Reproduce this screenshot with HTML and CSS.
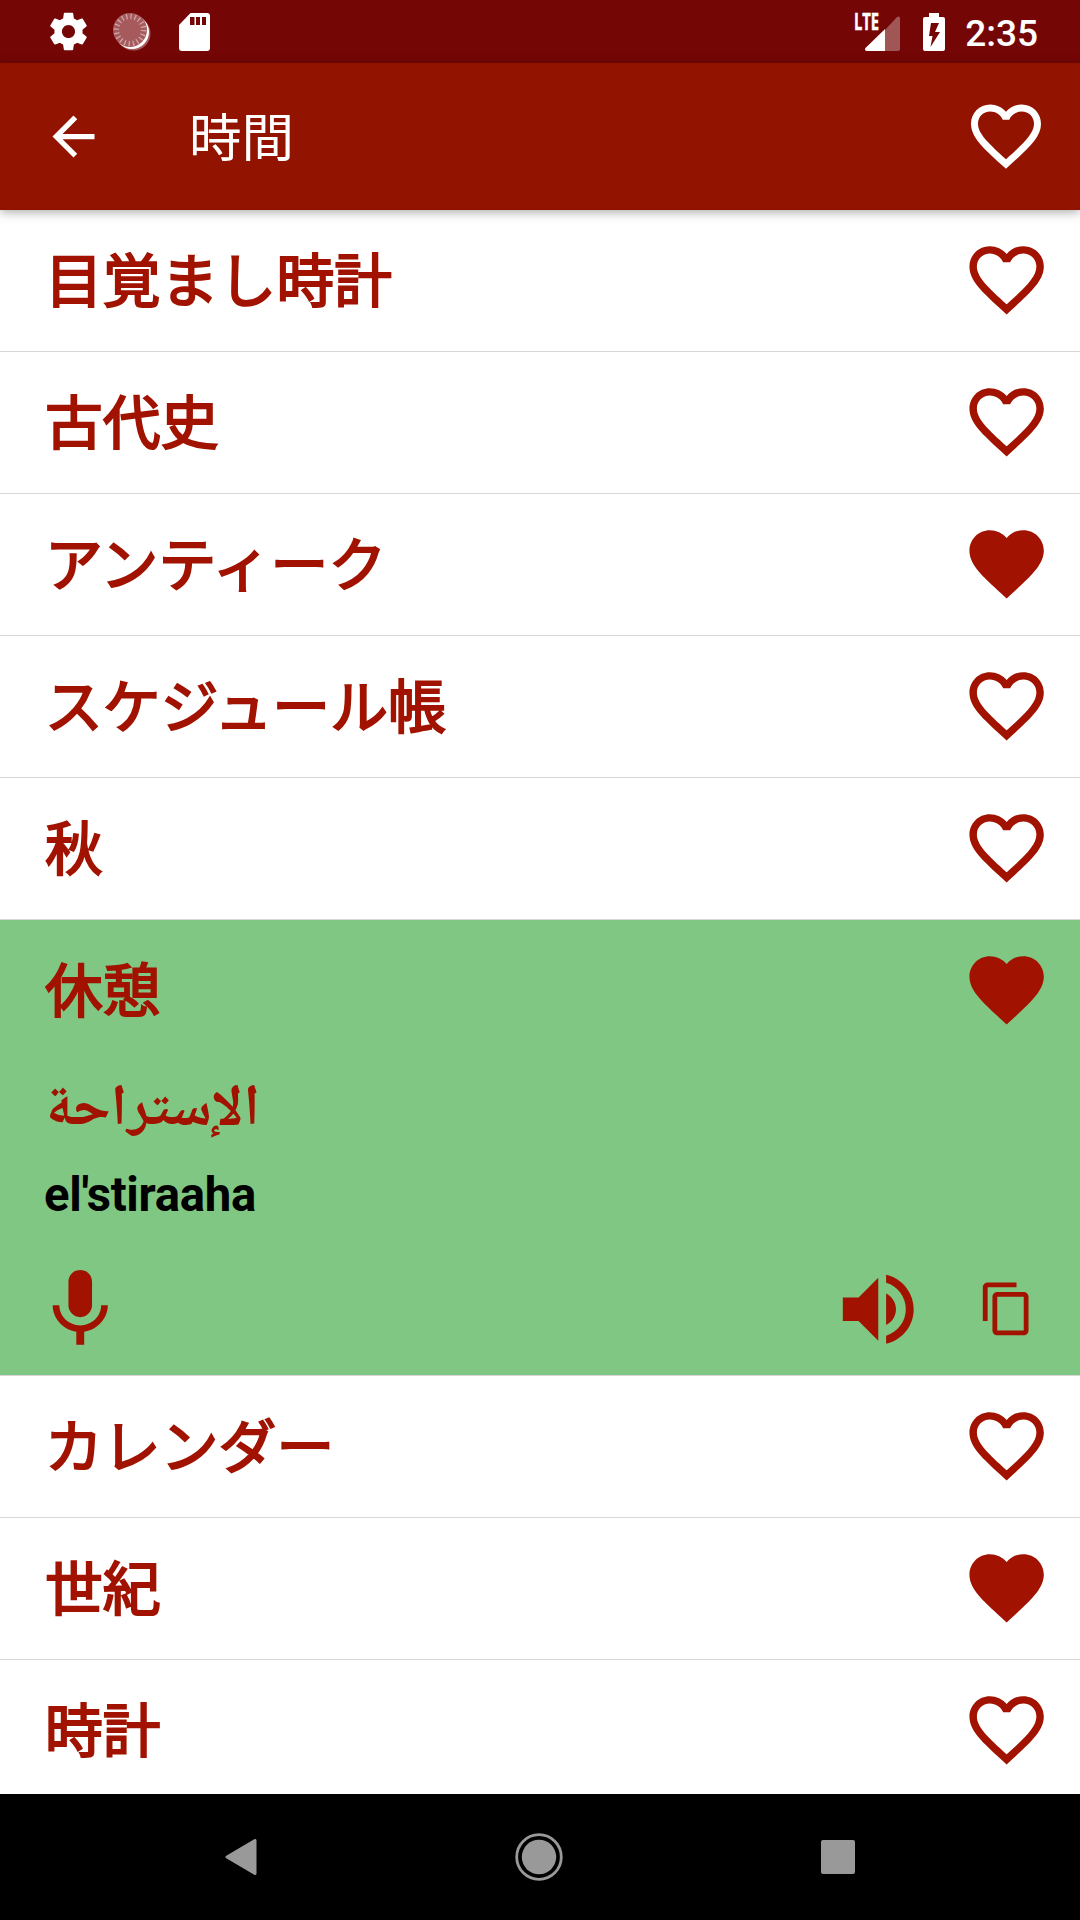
FILE: index.html
```html
<!DOCTYPE html>
<html lang="ja">
<head>
  <meta charset="UTF-8">
  <meta name="viewport" content="width=device-width, initial-scale=1.0">
  <title>時間</title>
  <link rel="stylesheet" href="styles.css">
</head>
<body>
  <!-- アイコン定義 -->
  <svg class="defs" width="0" height="0">
    <symbol id="heart-outline" viewBox="0 0 24 24">
      <path d="M16.5 3c-1.74 0-3.41.81-4.5 2.09C10.91 3.81 9.24 3 7.5 3 4.42 3 2 5.42 2 8.5c0 3.78 3.4 6.86 8.55 11.54L12 21.35l1.45-1.32C18.6 15.36 22 12.28 22 8.5 22 5.42 19.58 3 16.5 3zm-4.4 15.55l-.1.1-.1-.1C7.14 14.24 4 11.39 4 8.5 4 6.5 5.5 5 7.5 5c1.54 0 3.04.99 3.57 2.36h1.87C13.46 5.99 14.96 5 16.5 5c2 0 3.5 1.5 3.5 3.5 0 2.89-3.14 5.74-7.9 10.05z"/>
    </symbol>
    <symbol id="heart" viewBox="0 0 24 24">
      <path d="M12 21.35l-1.45-1.32C5.4 15.36 2 12.28 2 8.5 2 5.42 4.42 3 7.5 3c1.74 0 3.41.81 4.5 2.09C13.09 3.81 14.76 3 16.5 3 19.58 3 22 5.42 22 8.5c0 3.78-3.4 6.86-8.55 11.54L12 21.35z"/>
    </symbol>
  </svg>

  <div class="status-bar">
    <div class="status-left">
      <svg class="status-gear" viewBox="0 0 24 24"><path d="M19.43 12.98c.04-.32.07-.64.07-.98s-.03-.66-.07-.98l2.11-1.65c.19-.15.24-.42.12-.64l-2-3.46c-.12-.22-.39-.3-.61-.22l-2.49 1c-.52-.4-1.08-.73-1.69-.98l-.38-2.65C14.46 2.18 14.25 2 14 2h-4c-.25 0-.46.18-.49.42l-.38 2.65c-.61.25-1.17.59-1.69.98l-2.49-1c-.23-.09-.49 0-.61.22l-2 3.46c-.13.22-.07.49.12.64l2.11 1.65c-.04.32-.07.65-.07.98s.03.66.07.98l-2.11 1.65c-.19.15-.24.42-.12.64l2 3.46c.12.22.39.3.61.22l2.49-1c.52.4 1.08.73 1.69.98l.38 2.65c.03.24.24.42.49.42h4c.25 0 .46-.18.49-.42l.38-2.65c.61-.25 1.17-.59 1.69-.98l2.49 1c.23.09.49 0 .61-.22l2-3.46c.12-.22.07-.49-.12-.64l-2.11-1.65zM12 15.5c-1.93 0-3.5-1.57-3.5-3.5s1.57-3.5 3.5-3.5 3.5 1.57 3.5 3.5-1.57 3.5-3.5 3.5z"/></svg>
      <svg class="status-sync" viewBox="0 0 38 38">
        <circle cx="20.5" cy="20.5" r="17" fill="#a65a5c"/>
        <circle cx="19" cy="19" r="17" fill="#fff"/>
        <circle cx="17" cy="17" r="17" fill="#a65a5c"/>
        <circle class="ticks" cx="17" cy="17" r="13.6"/>
      </svg>
      <svg class="status-sd" viewBox="0 0 31 38"><path d="M11.5 0H28a3 3 0 0 1 3 3v32a3 3 0 0 1-3 3H3a3 3 0 0 1-3-3V12zM11 4v8h4.500V4zm6 0v8h4V4zm6 0v8h4V4z" fill-rule="evenodd"/></svg>
    </div>
    <div class="status-right">
      <div class="signal">
        <span class="signal-label">LTE</span>
        <svg class="signal-icon" viewBox="0 0 35 35"><path d="M20 14V35h13a2 2 0 0 0 2-2V2q-.5-2.500-3-1z" opacity=".32"/><path d="M20 13V35H1.500q-2.500-1-1-3z"/></svg>
      </div>
      <svg class="battery" viewBox="0 0 22 38"><path fill-rule="evenodd" d="M6 0h10v4h4a2 2 0 0 1 2 2v30a2 2 0 0 1-2 2H2a2 2 0 0 1-2-2V6a2 2 0 0 1 2-2h4zM8 10L6 23h3.500L7.500 34 17 19h-5l4-9z"/></svg>
      <span class="clock">2:35</span>
    </div>
  </div>

  <header class="toolbar">
    <svg class="back" viewBox="0 0 24 24"><path d="M20 11H7.830l5.590-5.590L12 4l-8 8 8 8 1.410-1.410L7.830 13H20v-2z"/></svg>
    <h1>時間</h1>
    <svg class="fav-all"><use href="#heart-outline"/></svg>
  </header>

  <main class="word-list">
    <div class="word"><div class="word-head"><span>目覚まし時計</span><svg class="fav"><use href="#heart-outline"/></svg></div></div>
    <div class="word"><div class="word-head"><span>古代史</span><svg class="fav"><use href="#heart-outline"/></svg></div></div>
    <div class="word"><div class="word-head"><span>アンティーク</span><svg class="fav"><use href="#heart"/></svg></div></div>
    <div class="word"><div class="word-head"><span>スケジュール帳</span><svg class="fav"><use href="#heart-outline"/></svg></div></div>
    <div class="word"><div class="word-head"><span>秋</span><svg class="fav"><use href="#heart-outline"/></svg></div></div>
    <div class="word open">
      <div class="word-head"><span>休憩</span><svg class="fav"><use href="#heart"/></svg></div>
      <p class="translation" lang="ar">الإستراحة</p>
      <p class="reading">el'stiraaha</p>
      <div class="actions">
        <svg class="mic" viewBox="0 0 24 24"><path d="M12 14c1.660 0 2.990-1.340 2.990-3L15 5c0-1.660-1.340-3-3-3S9 3.340 9 5v6c0 1.660 1.340 3 3 3zm5.300-3c0 3-2.540 5.100-5.300 5.100S6.700 14 6.700 11H5c0 3.410 2.720 6.230 6 6.720V21h2v-3.280c3.280-.48 6-3.300 6-6.720h-1.700z"/></svg>
        <svg class="speaker" viewBox="0 0 24 24"><path d="M3 9v6h4l5 5V4L7 9H3zm13.500 3c0-1.770-1.020-3.290-2.500-4.030v8.050c1.480-.73 2.500-2.250 2.500-4.020zM14 3.230v2.060c2.890.86 5 3.540 5 6.710s-2.110 5.850-5 6.710v2.060c4.010-.91 7-4.490 7-8.770s-2.990-7.860-7-8.770z"/></svg>
        <svg class="copy" viewBox="0 0 24 24"><path d="M16 1H4c-1.100 0-2 .9-2 2v14h2V3h12V1zm3 4H8c-1.100 0-2 .9-2 2v14c0 1.100.9 2 2 2h11c1.100 0 2-.9 2-2V7c0-1.100-.9-2-2-2zm0 16H8V7h11v14z"/></svg>
      </div>
    </div>
    <div class="word"><div class="word-head"><span>カレンダー</span><svg class="fav"><use href="#heart-outline"/></svg></div></div>
    <div class="word"><div class="word-head"><span>世紀</span><svg class="fav"><use href="#heart"/></svg></div></div>
    <div class="word"><div class="word-head"><span>時計</span><svg class="fav"><use href="#heart-outline"/></svg></div></div>
  </main>

  <nav class="nav-bar">
    <svg class="nav-back" viewBox="0 0 32 36"><path d="M30 1.500v33L2 18z"/></svg>
    <svg class="nav-home" viewBox="0 0 48 48"><circle cx="24" cy="24" r="17.200"/><circle class="ring" cx="24" cy="24" r="22.300"/></svg>
    <span class="nav-recent"></span>
  </nav>
</body>
</html>
```
FILE: styles.css
```css
* {
  box-sizing: border-box;
}
body {
  margin: 0;
  width: 1080px;
  height: 1920px;
  overflow: hidden;
  display: flex;
  flex-direction: column;
  background: #fff;
  color: #a11300;
  font-family: Roboto, "Noto Sans CJK JP", sans-serif;
}
svg {
  display: block;
  flex: none;
  fill: currentColor;
}
.defs {
  position: absolute;
}

/* ステータスバー */
.status-bar {
  flex: none;
  height: 63px;
  padding: 0 42px 0 46px;
  display: flex;
  justify-content: space-between;
  align-items: center;
  background: #750606;
  color: #fff;
}
.status-left,
.status-right {
  display: flex;
  align-items: center;
}
.status-gear {
  width: 45px;
  height: 45px;
}
.status-sync {
  width: 38px;
  height: 38px;
  margin-left: 22px;
}
.ticks {
  fill: none;
  stroke: #cfa5a6;
  stroke-width: 5.4;
  stroke-dasharray: 1.3 2.972;
}
.status-sd {
  width: 31px;
  height: 38px;
  margin-left: 28px;
}
.signal {
  position: relative;
  width: 46px;
  height: 38px;
  margin-right: 23px;
}
.signal-label {
  position: absolute;
  left: 0;
  top: 0;
  font: bold 23px/17px "Open Sans", sans-serif;
  -webkit-text-stroke: 0.5px currentColor;
  transform: scaleX(.64);
  transform-origin: left;
}
.signal-icon {
  width: 35px;
  height: 35px;
  margin: 3px 0 0 11px;
}
.battery {
  width: 22px;
  height: 38px;
  margin-right: 20px;
}
.clock {
  font-size: 37px;
  font-weight: 500;
  line-height: 60px;
  padding-top: 4px;
}

/* ツールバー */
.toolbar {
  flex: none;
  position: relative;
  height: 147px;
  padding: 0 32px 0 42px;
  display: flex;
  align-items: center;
  background: #921300;
  color: #fff;
  box-shadow: 0 2px 10px rgba(0,0,0,0.35);
}
.back {
  width: 63px;
  height: 63px;
}
.toolbar h1 {
  flex: 1;
  margin: 0 0 0 84px;
  padding-bottom: 6px;
  font-size: 52.5px;
  font-weight: 400;
}
.fav-all {
  width: 84px;
  height: 84px;
  margin-bottom: 2px;
}

/* 単語リスト */
.word-list {
  flex: 1;
  overflow: hidden;
}
.word {
  border-bottom: 1px solid #d6d6d6;
}
.word-head {
  height: 141px;
  padding: 0 29px 0 45px;
  display: flex;
  justify-content: space-between;
  align-items: center;
  font-size: 57.75px;
  letter-spacing: 0.1px;
  -webkit-text-stroke: 2px currentColor;
}
.word-head span {
  padding-bottom: 8px;
}
.fav {
  width: 89.25px;
  height: 89.25px;
  margin-bottom: 1px;
}
.open {
  height: 456px;
  background: #81c784;
}
.translation {
  margin: 0 46px;
  height: 88px;
  padding-top: 8px;
  font-size: 58.1px;
  line-height: 88px;
  font-weight: bold;
  font-family: "Noto Naskh Arabic", "DejaVu Sans", sans-serif;
}
.reading {
  margin: 0 44px;
  height: 90px;
  color: #000;
  font-size: 47.25px;
  letter-spacing: -0.3px;
  line-height: 92px;
  font-weight: bold;
}
.actions {
  display: flex;
  align-items: center;
  padding: 23px 44px 0 33px;
}
.mic,
.speaker {
  width: 94.5px;
  height: 94.5px;
}
.speaker {
  margin-left: auto;
  margin-right: 53px;
}
.copy {
  width: 57.75px;
  height: 57.75px;
}

/* ナビゲーションバー */
.nav-bar {
  flex: none;
  height: 126px;
  padding: 0 225px;
  display: flex;
  justify-content: space-between;
  align-items: center;
  background: #000;
  color: #999;
}
.nav-back {
  width: 32px;
  height: 36px;
  stroke: currentColor;
  stroke-width: 3;
  stroke-linejoin: round;
}
.nav-home {
  width: 48px;
  height: 48px;
  margin: 0 1px 1px 0;
}
.nav-home .ring {
  fill: none;
  stroke: currentColor;
  stroke-width: 2.8;
}
.nav-recent {
  width: 34px;
  height: 34px;
  border-radius: 2px;
  background: #999;
}
```
